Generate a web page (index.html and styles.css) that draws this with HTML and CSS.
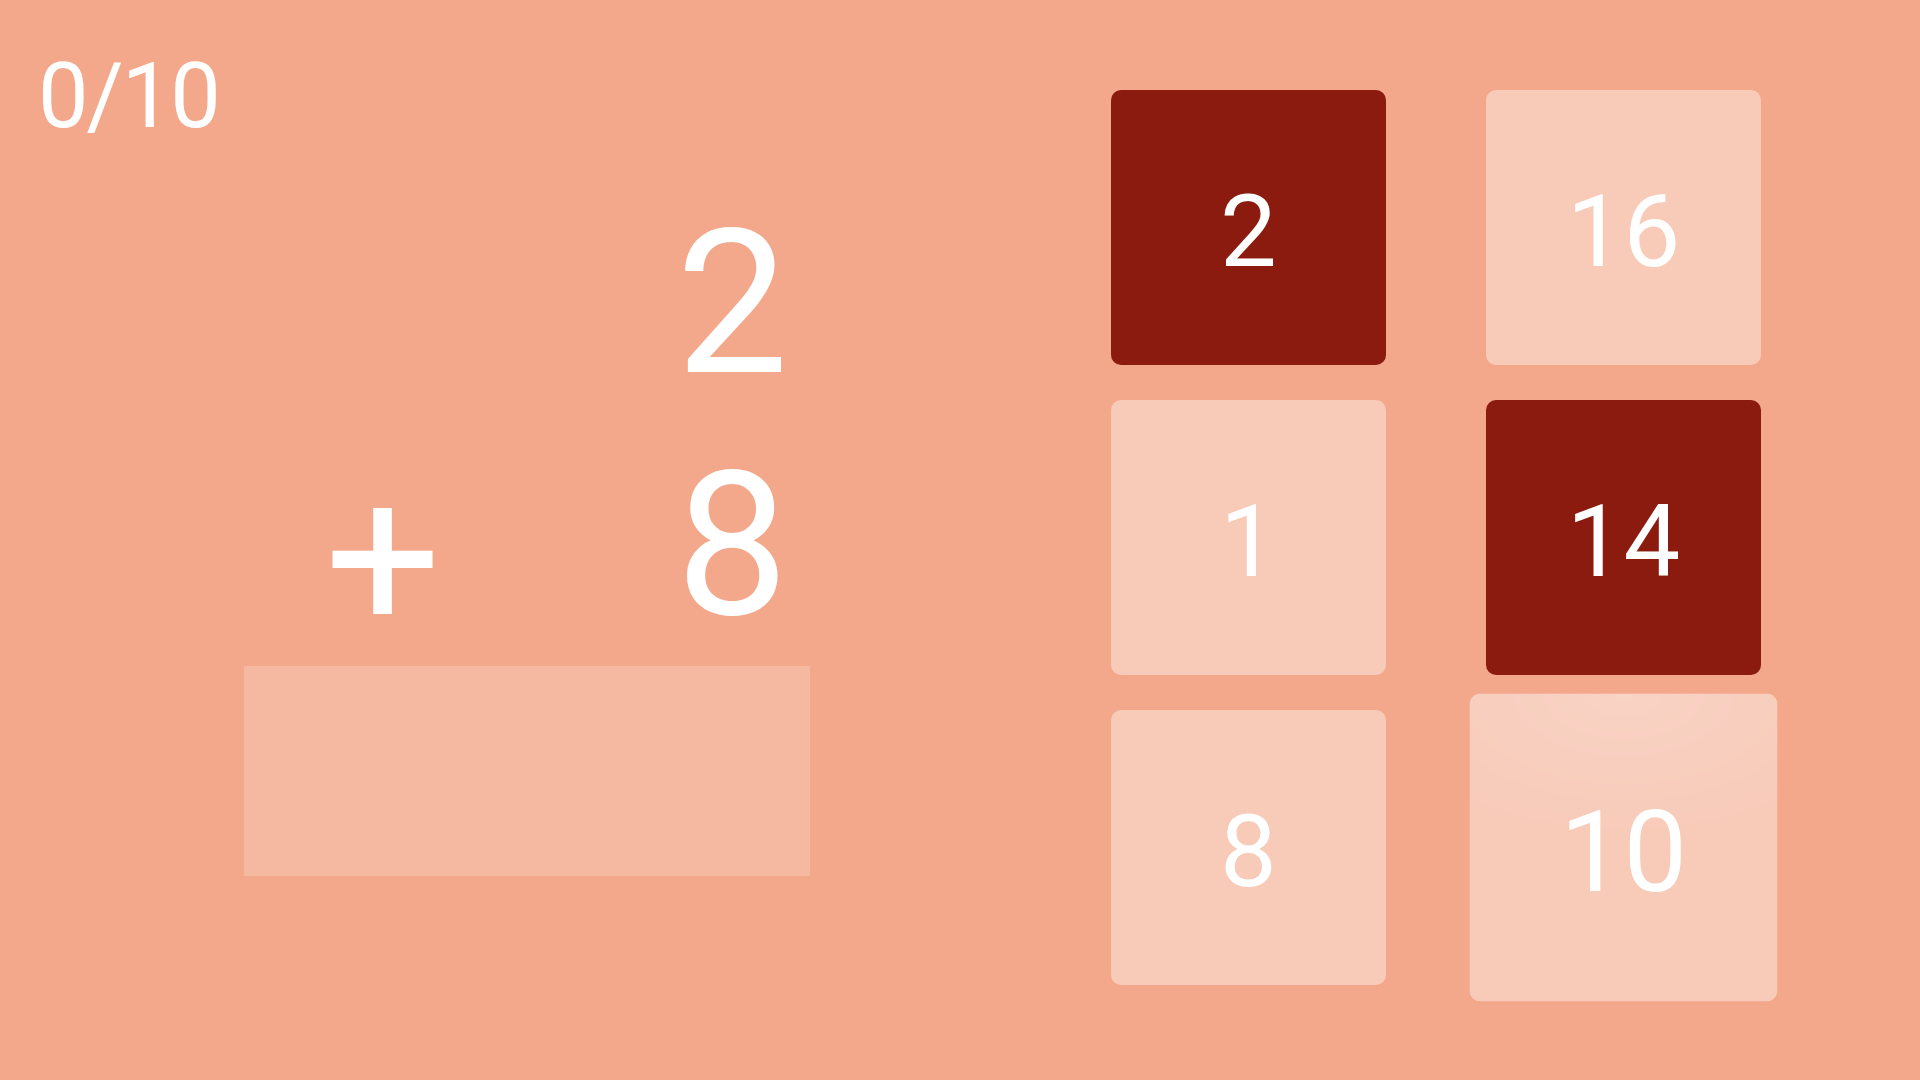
FILE: index.html
```html
<!DOCTYPE html>
<html lang="en">
<head>
<meta charset="utf-8">
<title>Addition game</title>
<link rel="stylesheet" href="styles.css">
</head>
<body>
<div class="app">
  <section class="left">
    <div class="score">0/10</div>
    <div class="problem">
      <div class="num num-top">2</div>
      <div class="op">+</div>
      <div class="num num-bottom">8</div>
      <div class="answer"></div>
    </div>
  </section>
  <section class="grid">
    <div class="tile dark">2</div>
    <div class="tile">16</div>
    <div class="tile">1</div>
    <div class="tile dark">14</div>
    <div class="tile">8</div>
    <div class="tile hover">10</div>
  </section>
</div>
</body>
</html>
```

FILE: styles.css
```css
html, body {
  margin: 0;
  padding: 0;
}

body {
  background: #f3a88b;
  color: #ffffff;
  font-family: Roboto, "Liberation Sans", Arial, sans-serif;
  width: 1920px;
  height: 1080px;
  overflow: hidden;
}

.app {
  display: flex;
  height: 1080px;
}

.left {
  width: 1111px;
  flex: none;
}

.score {
  font-size: 90px;
  line-height: 1;
  letter-spacing: -2px;
  padding: 52px 0 0 38px;
  height: 88px;
}

.problem {
  margin: 62px 0 0 244px;
  width: 566px;
  display: grid;
  grid-template-columns: 432px 112px 22px;
  grid-template-rows: 200px 200px 210px;
  row-gap: 44px;
}

.problem .answer {
  grid-column: 1 / 4;
  grid-row: 3;
  margin-top: -24px;
  background: rgba(255, 255, 255, 0.2);
  height: 210px;
}

.num {
  font-size: 200px;
  line-height: 1;
  grid-column: 2;
  text-align: center;
}

.num-top {
  grid-row: 1;
  padding-top: 2px;
  height: 198px;
}

.num-bottom {
  grid-row: 2;
}

.op {
  grid-column: 1;
  grid-row: 2;
  width: 278px;
  text-align: center;
  font-size: 205px;
  line-height: 1;
  margin-top: 11px;
  height: 200px;
}

.grid {
  padding-top: 90px;
  display: grid;
  grid-template-columns: 275px 275px;
  grid-auto-rows: 275px;
  column-gap: 100px;
  row-gap: 35px;
  align-content: start;
}

.tile {
  background: rgba(255, 255, 255, 0.4);
  border-radius: 10px;
  display: flex;
  align-items: center;
  justify-content: center;
  font-size: 101px;
  line-height: 1;
  padding-top: 8px;
  box-sizing: border-box;
}

.tile.dark {
  background: #8a1b0e;
}

.tile.hover {
  transform: scale(1.12);
  background:
    radial-gradient(ellipse 80% 45% at 50% 0%, rgba(255, 255, 255, 0.16), rgba(255, 255, 255, 0) 100%),
    rgba(255, 255, 255, 0.4);
}
```
